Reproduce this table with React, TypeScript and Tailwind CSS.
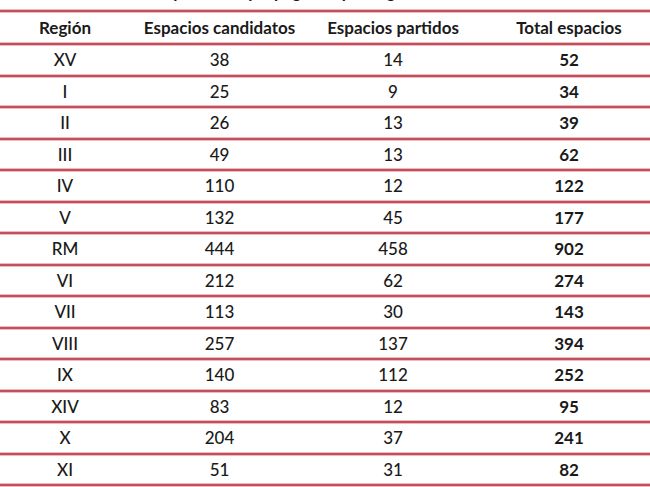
const ROWS: [string, number, number, number][] = [
  ['XV', 38, 14, 52],
  ['I', 25, 9, 34],
  ['II', 26, 13, 39],
  ['III', 49, 13, 62],
  ['IV', 110, 12, 122],
  ['V', 132, 45, 177],
  ['RM', 444, 458, 902],
  ['VI', 212, 62, 274],
  ['VII', 113, 30, 143],
  ['VIII', 257, 137, 394],
  ['IX', 140, 112, 252],
  ['XIV', 83, 12, 95],
  ['X', 204, 37, 241],
  ['XI', 51, 31, 82],
];

const GRID = 'grid grid-cols-[130px_179px_168px_1fr] items-center text-center';

function Rule() {
  return (
    <div className="flex flex-col">
      <div className="h-px bg-[#eeb9bf]" />
      <div className="h-[2px] bg-[#c24f5c]" />
      <div className="h-px bg-[#eeb9bf]" />
    </div>
  );
}

export default function App() {
  return (
    <div
      className="w-[650px] h-[487px] overflow-hidden bg-white text-[#1a1a1a] text-[17px]"
      style={{ fontFamily: 'Lato, "Open Sans", sans-serif' }}
    >
      {/* cut-off caption: only descenders show */}
      <div className="h-[9px] overflow-hidden relative">
        <p className="absolute left-[60px] -top-[17px] font-bold text-[17px] leading-[18px] whitespace-nowrap">
          Distribución espacios de propaganda por región
        </p>
      </div>
      <Rule />
      <div className={`${GRID} h-[29px] font-bold`}>
        <span>Región</span>
        <span>Espacios candidatos</span>
        <span>Espacios partidos</span>
        <span className="pl-[11px]">Total espacios</span>
      </div>
      <Rule />
      {ROWS.map(([region, cand, part, total]) => (
        <div key={region}>
          <div className={`${GRID} h-[27.5px] font-medium`}>
            <span>{region}</span>
            <span>{cand}</span>
            <span>{part}</span>
            <span className="pl-[11px] font-bold">{total}</span>
          </div>
          <Rule />
        </div>
      ))}
    </div>
  );
}
